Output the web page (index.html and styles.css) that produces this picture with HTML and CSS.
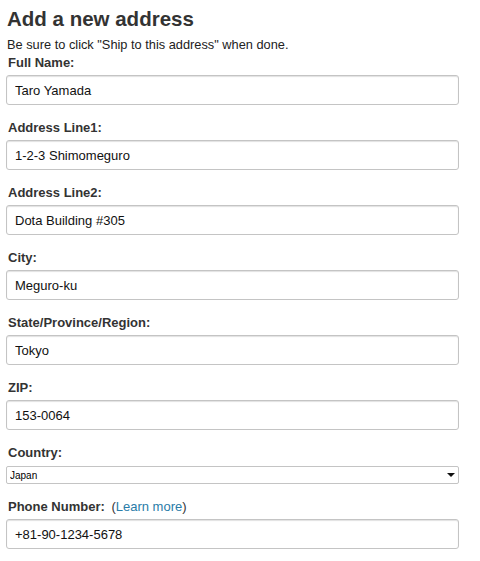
FILE: index.html
```html
<!DOCTYPE html>
<html lang="en">
<head>
    <meta charset="UTF-8">
    <meta name="viewport" content="width=device-width, initial-scale=1.0">
    <title>Add a new address</title>
    <link rel="stylesheet" href="styles.css">
</head>
<body>
    <div class="address-form">
        <h1>Add a new address</h1>
        <p class="note">Be sure to click "Ship to this address" when done.</p>

        <div class="field first">
            <label for="name">Full Name:</label>
            <input type="text" id="name" value="Taro Yamada">
        </div>

        <div class="field">
            <label for="line1">Address Line1:</label>
            <input type="text" id="line1" value="1-2-3 Shimomeguro">
        </div>

        <div class="field">
            <label for="line2">Address Line2:</label>
            <input type="text" id="line2" value="Dota Building #305">
        </div>

        <div class="field">
            <label for="city">City:</label>
            <input type="text" id="city" value="Meguro-ku">
        </div>

        <div class="field">
            <label for="state">State/Province/Region:</label>
            <input type="text" id="state" value="Tokyo">
        </div>

        <div class="field">
            <label for="zip">ZIP:</label>
            <input type="text" id="zip" value="153-0064">
        </div>

        <div class="field">
            <label for="country">Country:</label>
            <div class="select-wrap">
                <select id="country">
                    <option>Japan</option>
                </select>
            </div>
        </div>

        <div class="field">
            <label for="phone">Phone Number: <span class="help">(<a href="#">Learn more</a>)</span></label>
            <input type="text" id="phone" value="+81-90-1234-5678">
        </div>
    </div>
</body>
</html>
```

FILE: styles.css
```css
body {
    margin: 0;
    font-family: 'Liberation Sans', Arial, sans-serif;
    color: #333;
    background: #fff;
}

.address-form {
    padding: 7px 21px 0 6px;
}

h1 {
    margin: 0 0 0 1px;
    font-size: 20.5px;
    line-height: 24px;
    font-weight: bold;
    color: #333;
}

.note {
    margin: 7px 0 0 1px;
    font-size: 12.8px;
    line-height: 14px;
    color: #222;
}

.field {
    margin-top: 15px;
}

.field.first {
    margin-top: 3px;
}

label {
    display: block;
    margin: 0 0 4px 2px;
    font-size: 13px;
    line-height: 16px;
    font-weight: bold;
    color: #333;
}

.help {
    margin-left: 3px;
    font-weight: normal;
    color: #333;
}

.help a {
    color: #2a7ca8;
    text-decoration: none;
}

input {
    display: block;
    box-sizing: border-box;
    width: 100%;
    height: 30px;
    padding: 0 8px;
    font-family: 'Liberation Sans', Arial, sans-serif;
    font-size: 13px;
    color: #111;
    border: 1px solid #c4c4c4;
    border-radius: 3px;
    box-shadow: inset 0 1px 1px #e2e2e2;
}

.select-wrap {
    position: relative;
    margin-top: 5px;
}

select {
    display: block;
    box-sizing: border-box;
    width: 100%;
    height: 18px;
    padding: 0 3px;
    font-family: 'Liberation Sans', Arial, sans-serif;
    font-size: 10px;
    color: #000;
    background: #fff;
    border: 1px solid #c4c4c4;
    border-radius: 2px;
    appearance: none;
    -webkit-appearance: none;
}

.select-wrap::after {
    content: "";
    position: absolute;
    right: 4px;
    top: 7px;
    border-left: 4px solid transparent;
    border-right: 4px solid transparent;
    border-top: 4px solid #111;
    pointer-events: none;
}
```
